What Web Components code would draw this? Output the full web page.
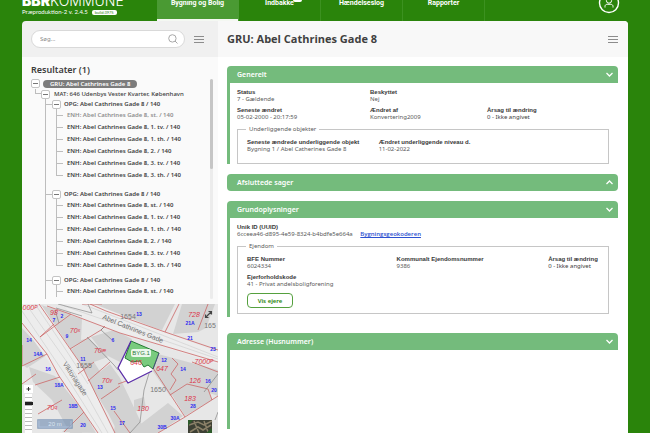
<!DOCTYPE html>
<html lang="da">
<head>
<meta charset="utf-8">
<title>BBR Kommune</title>
<style>
  html, body { margin: 0; height: 100%; }
  body {
    --green: #2a840b; --soft: #74bb7c; --ink: #3c3c3c; --line: #bdbdbd;
    background: var(--green); color: var(--ink);
    font: 6px/7px "Noto Sans", "Open Sans", sans-serif;
    overflow: hidden;
  }
</style>
</head>
<body>
<bbr-app></bbr-app>

<script>
const define = (name, html) => {
  const t = document.createElement('template');
  t.innerHTML = html;
  customElements.define(name, class extends HTMLElement {
    constructor() {
      super();
      this.attachShadow({ mode: 'open' }).append(t.content.cloneNode(true));
    }
    connectedCallback() {
      this.shadowRoot.querySelectorAll('[data-attr]').forEach(el => {
        el.textContent = this.getAttribute(el.dataset.attr) || '';
      });
    }
  });
};

define('menu-button', `
<style>
  :host { display: block; }
  button { display: grid; gap: 2px; width: 10px; padding: 0; border: 0; background: none; }
  i { height: 1px; background: #8c8c8c; }
</style>
<button aria-label="Menu"><i></i><i></i><i></i></button>`);

define('nav-tab', `
<style>
  :host { display: flex; flex: 1; border-right: 1px solid #3c9120; box-sizing: border-box; }
  :host([active]) { background: #4a9a33; border-right-color: #4a9a33; box-shadow: inset 0 -2px #f4f8f2; }
  a { flex: 1; display: flex; justify-content: center; padding-bottom: 13px; align-items: flex-end;
      color: #fff; text-decoration: none; font: 700 7px/9px Roboto, sans-serif; }
</style>
<a href="#"><slot></slot></a>`);

define('app-header', `
<style>
  :host { display: flex; height: 21px; padding: 0 30px 0 22px; color: #fff; }
  .brand { width: 135px; display: flex; flex-direction: column; justify-content: flex-end; padding-bottom: 5px; box-sizing: border-box; }
  .logo { font: 300 14px/14px Inter, "Noto Sans", sans-serif; white-space: nowrap; }
  .logo b { font-weight: 900; }
  .ver { display: flex; align-items: center; gap: 4px; font-family: Lato, sans-serif; line-height: 8px; white-space: nowrap; }
  .build { background: #fff; color: var(--green); border-radius: 2px; font-size: 4px; line-height: 5px; padding: 0 3px; }
  nav { display: flex; width: 328px; }
  .inbox { position: relative; }
  .badge { position: absolute; left: 28px; top: -2px; width: 9px; height: 5px; border-radius: 2px; background: #fff; }
  .user { margin: -8px 0 0 auto; width: 22px; height: 22px; padding: 0; border: 0; background: none; }
</style>
<div class="brand">
  <div class="logo"><b>BBR</b>KOMMUNE</div>
  <div class="ver"><span>Præproduktion-2 v. 2.4.5</span><span class="build">build:3975</span></div>
</div>
<nav>
  <nav-tab active>Bygning og Bolig</nav-tab>
  <nav-tab><span class="inbox">Indbakke<span class="badge"></span></span></nav-tab>
  <nav-tab>Hændelseslog</nav-tab>
  <nav-tab>Rapporter</nav-tab>
</nav>
<button class="user" aria-label="Bruger">
  <svg width="22" height="22" viewBox="0 0 22 22" fill="none" stroke="#fff">
    <circle cx="11" cy="11" r="9.5" stroke-width="1.4"/><circle cx="11" cy="8.600" r="2.600"/>
    <path d="M7 15.500v-1.200c0-1.200 1-2 2.200-2h3.600c1.200 0 2.200.8 2.200 2v1.200"/>
  </svg>
</button>`);

define('search-box', `
<style>
  :host { display: flex; flex: 1; min-width: 0; }
  label { display: flex; flex: 1; align-items: center; min-width: 0; height: 18px; box-sizing: border-box;
    padding: 0 6px 0 8px; border: 1px solid #d9d9d9; border-radius: 9px; background: #fff; }
  input { flex: 1; min-width: 0; border: 0; padding: 0; outline: 0; background: none; font: inherit; color: inherit; }
  input::placeholder { color: #8a8a8a; }
</style>
<label><input type="text" placeholder="Søg..." aria-label="Søg">
  <svg width="10" height="10" viewBox="0 0 10 10" fill="none" stroke="#a8a8a8"><circle cx="4.400" cy="4.400" r="3.700"/><path d="M7 7l2.500 2.500"/></svg>
</label>`);

define('tree-toggle', `
<style>
  :host { display: block; flex: none; }
  button { display: grid; place-items: center; width: 9px; height: 9px; padding: 0; border: 1px solid #c4c4c4; border-radius: 2px; background: #fff; }
  i { width: 5px; height: 1px; background: #777; }
</style>
<button aria-label="Fold sammen"><i></i></button>`);

define('tree-leaf', `
<style>
  :host { display: flex; align-items: center; height: 12px; gap: 3px; white-space: nowrap; font-weight: 600;
    --half: 100%; }
  :host([last]) { --half: 50%; }
  :host([muted]) { color: #8e8e8e; }
  i { width: 8px; align-self: stretch; background:
    linear-gradient(var(--line), var(--line)) 0 0 / 1px var(--half) no-repeat,
    linear-gradient(var(--line), var(--line)) 0 50% / 7px 1px no-repeat; }
</style>
<i></i><span>ENH: Abel Cathrines Gade 8, <slot></slot> / 140</span>`);

define('tree-group', `
<style>
  :host { display: block; border-left: 1px solid var(--line); padding-bottom: 8px; }
  :host([tight]) { padding-bottom: 4px; }
  .head { display: flex; align-items: center; height: 10px; gap: 3px; white-space: nowrap; font-weight: 600; }
  .head i { width: 6px; height: 1px; background: var(--line); margin-right: -3px; }
  .kids { padding-left: 10px; }
</style>
<div class="head"><i></i><tree-toggle></tree-toggle><span>OPG: Abel Cathrines Gade 8 / 140</span></div>
<div class="kids"><slot></slot></div>`);

define('result-tree', `
<style>
  :host { display: flex; flex: 1; min-height: 0; padding: 7px 5px 5px 9px; background: #fafafa; }
  .list { flex: 1; min-width: 0; overflow: hidden; line-height: 8px; }
  h2 { margin: 0; font: 600 9px/12px "Noto Sans", sans-serif; height: 14px; }
  .row { display: flex; align-items: center; gap: 3px; white-space: nowrap; height: 11px; }
  .pill { background: #7c7c7c; color: #fff; border-radius: 4px; padding: 0 7px; line-height: 8px; font-weight: 600; }
  .mat { height: 10px; gap: 4px; padding-left: 4px; font-weight: 500; }
  .mat i { width: 6px; height: 5px; align-self: flex-start; border: solid var(--line); border-width: 0 0 1px 1px; margin-right: -4px; box-sizing: border-box; }
  .groups { padding-left: 14px; }
  .bar { width: 3px; margin-top: 15px; background: #ececec; border-radius: 2px; }
  .bar i { display: block; height: 41%; background: #c6c6c6; border-radius: 2px; }
</style>
<div class="list">
  <h2>Resultater (1)</h2>
  <div class="row"><tree-toggle></tree-toggle><span class="pill">GRU: Abel Cathrines Gade 8</span></div>
  <div class="row mat"><i></i><tree-toggle></tree-toggle><span>MAT: 646 Udenbys Vester Kvarter, København</span></div>
  <div class="groups">
    <tree-group><tree-leaf muted>st.</tree-leaf><tree-leaf>1. tv.</tree-leaf><tree-leaf>1. th.</tree-leaf><tree-leaf>2.</tree-leaf><tree-leaf>3. tv.</tree-leaf><tree-leaf last>3. th.</tree-leaf></tree-group>
    <tree-group tight><tree-leaf>st.</tree-leaf><tree-leaf>1. tv.</tree-leaf><tree-leaf>1. th.</tree-leaf><tree-leaf>2.</tree-leaf><tree-leaf>3. tv.</tree-leaf><tree-leaf last>3. th.</tree-leaf></tree-group>
    <tree-group><tree-leaf>st.</tree-leaf></tree-group>
  </div>
</div>
<div class="bar"><i></i></div>`);

const label = (cls, rows) => rows.map(([t, x, y, sup]) =>
  `<text class="${cls}" x="${x}" y="${y + 2}">${t}${sup ? `<tspan font-size="5" dy="-1">${sup}</tspan>` : ''}</text>`).join('');
define('map-view', `
<style>
  :host { display: block; background: #e7e7e7; min-height: 0; }
  svg { display: block; width: 100%; height: 100%; }
  text { font-family: "Liberation Sans", sans-serif; text-anchor: middle; }
  .n { fill: #2a2af0; font-size: 5px; font-weight: 700; }
  .r { fill: #dc3448; font-size: 7px; font-style: italic; }
  .g { fill: #777; font-size: 7px; }
  .s { fill: #6e6e6e; font-size: 7px; }
  .b { fill: #d2d2d2; }
  .p { fill: none; stroke: #c66; stroke-width: .8; }
  .k { fill: none; stroke: #777; stroke-width: .6; }
  .w { fill: none; stroke: #c6c6c6; stroke-width: .5; }
</style>
<svg viewBox="0 0 196 129" preserveAspectRatio="xMidYMid slice" role="img" aria-label="Kort">
  <rect width="196" height="129" fill="#e7e7e7"/>
  <path class="b" d="M0 24L25 51L5 64L0 60ZM19 1L49 10L30 21ZM30 21L48 11L60 15L59 36L67 34L48 45ZM7 63L33 72L62 108L60 129H48L30 96L11 78ZM92 26L110 35L98 58L82 50L69 33ZM48 46L67 34L86 53L72 58L92 90L85 100ZM66 77L88 60L98 74L108 95L124 129H96L86 109ZM72 0H153L140 26L112 18L80 6ZM160 0H193L184 24L176 28L151 30ZM136 50L196 66V92L168 82L148 92L130 66ZM150 91L168 81L186 86L190 96L163 112ZM112 96L122 93L124 104L112 108ZM94 107L110 129H92ZM110 129L120 119L146 99L161 112L136 129ZM40 128L62 108L74 129Z"/>
  <path fill="#ededed" d="M3 0L20 2L60 62L92 129H76L37 72L0 20V0ZM40 0H72L143 28L196 48V60L98 29L50 11Z"/>
  <path class="w" d="M6 3L52 68L86 129M13 0L40 40L66 80M42 2L100 22L196 55M60 0L140 31L196 53M0 7L46 75L80 129"/>
  <path class="p" d="M0 19L25 50L37 72L76 129M17 0L60 62L93 129M25 2L48 10L98 29L196 58M68 0L84 7L143 28L196 46M49 10L18 33L32 20M48 45L79 26L83 22M0 41L0 62L25 50M13 81L38 73M16 110L40 96M42 128L62 108M72 58L56 70M66 77L88 58M79 95L98 82M143 28L157 0M176 26L186 0M150 54L156 60L149 70L154 76L148 86M131 64L163 113L196 92M148 91L165 80L186 85L190 96M136 129L163 113M96 80L110 75M92 107L108 129M0 80L14 70M170 58L196 68M60 0L80 0"/>
  <path class="k" d="M33 6L37 19M34 4L60 12M65 33L92 61L96 66M128 66L122 86L118 118L108 129M82 23L79 26L90 36M182 88L196 70M36 0L70 9L66 0M193 116L196 108"/>
  <path d="M96 64L108 38L112 56L132 60L130 67L106 79Z" fill="#fff"/>
  <path d="M109 37L137 49L131 65L126 61L122 63L118 57L110 58L103 54Z" fill="#79cb7e" stroke="#257b35"/>
  <path d="M109 37L96 64L106 79L130 67" fill="none" stroke="#5a2ca8" stroke-width="1.300"/>
  <path d="M137 49L131 65" stroke="#5a2ca8" stroke-width=".6"/>
  ${label('g', [['1654',106,13],['1655',62,62],['1650',136,86],['165',188,22]])}
  ${label('r', [['98',32,9],['70',53,27,'x'],['70',78,47,'æ'],['728',172,11],['7000',182,58,'P'],['647',140,65],['646',114,59],['126',173,77],['183',168,95],['130',121,105],['70',85,77,'y'],['70',30,104,'q'],['000',8,4,'P']])}
  ${label('n', [['2',40,12],['7',32,16],['9',45,32],['6',91,36],['14',7,36],['14A',16,50],['11',61,55],['13',117,10],['21A',168,19],['21',168,34],['23',191,45],['12',142,56],['14',161,65],['16',186,77],['20',192,86],['28',171,102],['30A',153,114],['30B',140,123],['17',100,119],['16',26,65],['18A',37,81],['13',78,83],['15',91,104],['18B',51,102],['20',61,121]])}
  <text class="s" transform="translate(110 27) rotate(22)">Abel Cathrines Gade</text>
  <text class="s" transform="translate(51 76) rotate(57)">Viktoriagade</text>
  <rect x="109" y="45" width="20" height="8" rx="2" fill="#fff" fill-opacity=".85"/>
  <text x="119" y="51" font-size="6" fill="#2c7a38">BYG.1</text>
  <path d="M184 13l5-5M186.500 7.500h3v3M183.500 10.500v3h3" fill="none" stroke="#444" stroke-width="1.200"/>
  <rect x="2" y="81" width="9" height="8" fill="#fff"/><path d="M4.500 85h4M6.500 83v4" stroke="#222" stroke-width=".9"/>
  <path d="M6.500 90V129" stroke="#fff" stroke-width="7" stroke-dasharray="3 1"/><path d="M6.500 90V129" stroke="#bbb" stroke-width="7" stroke-dasharray="1 3" stroke-dashoffset="1"/>
  <rect x="3" y="98" width="8" height="3" fill="#222"/>
  <rect x="15" y="115" width="36" height="10" rx="1" fill="#7590b4" fill-opacity=".65"/><path d="M17 117v6h32v-6" fill="none" stroke="#a9bdd8"/>
  <text x="33" y="122" font-size="6" fill="#dce6f2">20 m</text>
  <rect x="166" y="116" width="24" height="13" fill="#3d4034"/><path d="M167 121l9-3 6 3 8-4M168 128l8-5 5 3 8-5M172 117l5 12M182 117l4 11" stroke="#8b8068" stroke-width="1.500" fill="none"/><path d="M166 116h5l-5 6zM184 129l6-5v5z" fill="#2d5a2a"/>
</svg>`);

define('info-section', `
<style>
  :host { display: block; }
  button { display: flex; justify-content: space-between; align-items: center; width: 100%; height: 17px; padding: 0 4px 0 10px;
    border: 0; border-radius: 4px 4px 0 0; background: var(--soft); color: #fff; font: 600 7px/10px "Noto Sans", sans-serif; text-align: left; }
  .body { border-left: 3px solid var(--soft); padding: 6px 9px 0 7px; }
  :host([tall]) .body { height: 73px; }
  :host([roomy]) { padding-bottom: 6px; }
  :host([roomy]) .body { padding-bottom: 3px; }
  :host([closed]) button { border-radius: 4px; }
  :host([closed]) .body { display: none; }
  :host([closed]) svg { transform: scaleY(-1); }
</style>
<button><span data-attr="heading"></span>
  <svg width="9" height="7" viewBox="0 0 9 7" fill="none" stroke="#fff" stroke-width="1.300"><path d="M1.500 2l3 3 3-3"/></svg></button>
<div class="body"><slot></slot></div>`);

define('info-field', `
<style>
  :host { display: block; white-space: nowrap; color: #5a5a5a; }
  :host([dark]) { color: var(--ink); }
  b { display: block; font-weight: 700; font-family: "Liberation Sans", sans-serif; color: #383838; }
</style>
<b data-attr="name"></b><slot></slot>`);

define('field-box', `
<style>
  :host { display: block; }
  fieldset { margin: 0; min-width: 0; padding: 6px 10px 5px 9px; border: 1px solid #c6c6c6; }
  legend { padding: 0 3px; margin-left: -1px; color: #5a5a5a; line-height: 8px; }
</style>
<fieldset><legend data-attr="name"></legend><slot></slot></fieldset>`);

define('detail-pane', `
<style>
  :host { display: flex; flex-direction: column; min-width: 0; background: #fff; }
  header { display: flex; align-items: center; justify-content: space-between; height: 36px; flex: none; padding: 0 10px 0 9px; background: #f8f8f8; }
  h1 { margin: 0; font: 700 11px/14px "Open Sans", sans-serif; color: #404040; }
  main { display: grid; align-content: start; gap: 10px; padding: 9px 10px 0 9px; }
  .g { display: grid; grid-template-columns: 133fr 117fr 122fr; row-gap: 4px; }
  .u { display: grid; grid-template-columns: 132fr 220fr; padding-bottom: 5px; }
  .e { display: grid; grid-template-columns: 150fr 152fr 50fr; row-gap: 4px; }
  a { color: #2c50d0; font-weight: 600; font-family: "Open Sans", sans-serif; margin-left: 6px; }
  .own { margin-top: 5px; width: 46px; height: 15px; padding: 0; border: 1px solid #55a03e; border-radius: 4px; background: #fff; color: var(--green); font: 600 6px/8px "Noto Sans", sans-serif; }
  field-box { margin-top: 4px; }
</style>
<header><h1>GRU: Abel Cathrines Gade 8</h1><menu-button></menu-button></header>
<main>
  <info-section heading="Generelt">
    <div class="g">
      <info-field name="Status">7 - Gældende</info-field><info-field name="Beskyttet">Nej</info-field><span></span>
      <info-field name="Seneste ændret">05-02-2000 - 20:17:59</info-field><info-field name="Ændret af">Konvertering2009</info-field><info-field dark name="Årsag til ændring">0 - Ikke angivet</info-field>
    </div>
    <field-box name="Underliggende objekter"><div class="u">
      <info-field name="Seneste ændrede underliggende objekt">Bygning 1 / Abel Catherines Gade 8</info-field>
      <info-field name="Ændret underliggende niveau d.">11-02-2022</info-field>
    </div></field-box>
  </info-section>
  <info-section closed heading="Afsluttede sager"></info-section>
  <info-section roomy heading="Grundoplysninger">
    <info-field name="Unik ID (UUID)">6cceea46-d895-4e59-8324-b4bdfe5e664a <a href="#">Bygningsgeokoderen</a></info-field>
    <field-box name="Ejendom"><div class="e">
      <info-field name="BFE Nummer">6024334</info-field><info-field name="Kommunalt Ejendomsnummer">9386</info-field><info-field dark name="Årsag til ændring">0 - Ikke angivet</info-field>
      <info-field name="Ejerforholdskode">41 - Privat andelsboligforening</info-field>
    </div><button class="own">Vis ejere</button></field-box>
  </info-section>
  <info-section tall heading="Adresse (Husnummer)"></info-section>
</main>`);

define('side-pane', `
<style>
  :host { display: grid; grid-template-rows: 36px minmax(0, 247fr) minmax(0, 129fr); min-width: 0; min-height: 0; }
  .top { display: flex; align-items: center; gap: 9px; padding: 0 14px 0 9px; background: #f0f0f0; }
</style>
<div class="top"><search-box></search-box><menu-button></menu-button></div>
<result-tree></result-tree>
<map-view></map-view>`);

define('bbr-app', `
<style>
  :host { display: grid; grid-template-rows: 21px minmax(0, 1fr); height: 100vh; }
  .page { display: grid; grid-template-columns: 196fr 410fr; grid-template-rows: minmax(0, 1fr); margin: 0 22px; border-radius: 4px 4px 0 0; overflow: hidden; }
</style>
<app-header></app-header>
<div class="page"><side-pane></side-pane><detail-pane></detail-pane></div>`);
</script>
</body>
</html>
